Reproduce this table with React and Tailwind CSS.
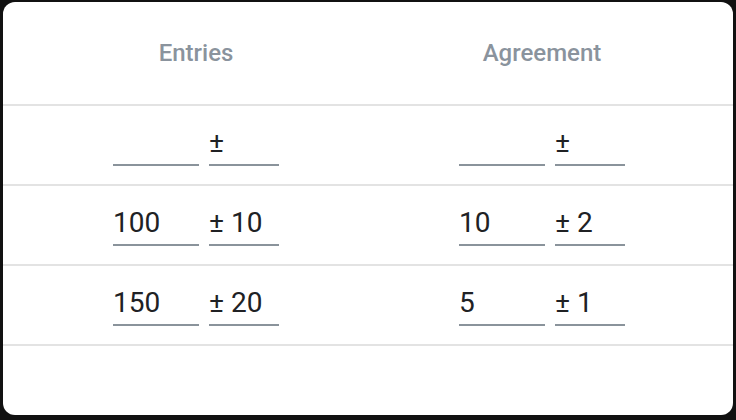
const rows = [
    { entries: "", entriesTol: "", agreement: "", agreementTol: "" },
    { entries: "100", entriesTol: "10", agreement: "10", agreementTol: "2" },
    { entries: "150", entriesTol: "20", agreement: "5", agreementTol: "1" },
]

function Field({ value, width }) {
    return (
        <div className={`${width} border-b-2 border-[#8a939b] text-[28px] leading-[30px] pb-[6px] text-[#202124] h-[38px] whitespace-pre`}>
            {value}
        </div>
    )
}

function Pair({ value, tol }) {
    return (
        <div className="flex justify-center gap-[10px]">
            <Field value={value} width="w-[86px]" />
            <Field value={"± " + tol} width="w-[70px]" />
        </div>
    )
}

export default function App() {
    return (
        <div className="w-[736px] h-[420px] bg-[#111111] pt-[2px] px-[3px] pb-[5px]" style={{ fontFamily: "Roboto, sans-serif" }}>
            <div className="h-full bg-white rounded-[12px] overflow-hidden">
                <div className="grid grid-cols-2 pl-[20px] pr-[18px] h-[104px] border-b-2 border-[#e3e3e3] items-center">
                    <div className="text-center text-[24px] font-medium text-[#8a939d]">Entries</div>
                    <div className="text-center text-[24px] font-medium text-[#8a939d]">Agreement</div>
                </div>
                {rows.map((r, i) => (
                    <div key={i} className="grid grid-cols-2 pl-[20px] pr-[18px] h-[80px] border-b-2 border-[#e3e3e3] pt-[22px]">
                        <Pair value={r.entries} tol={r.entriesTol} />
                        <Pair value={r.agreement} tol={r.agreementTol} />
                    </div>
                ))}
            </div>
        </div>
    )
}
